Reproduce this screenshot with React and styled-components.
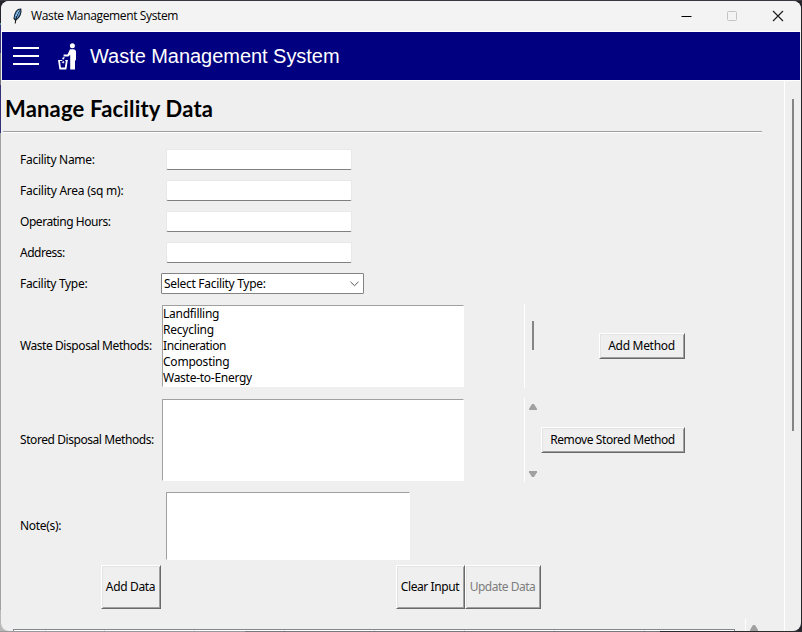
import React from "react";
import styled, { createGlobalStyle } from "styled-components";

const GlobalStyle = createGlobalStyle`
  * { box-sizing: border-box; }
  html, body { margin: 0; padding: 0; overflow: hidden; }
  body { font-family: "Noto Sans", "Open Sans", sans-serif; font-size: 12px; color: #000; }
`;

const Desktop = styled.div`
  width: 802px;
  height: 632px;
  padding: 1px 1px 1px 1px;
  background:
    linear-gradient(#39373f, #39373f) 0 0 / 100% 1px no-repeat,
    linear-gradient(90deg, #999 0 245px, #777 245px 660px, #2b2b2e 660px) 0 631px / 100% 1px no-repeat,
    linear-gradient(#25232c 0 23px, #5a8a9a 23px 25px, #34307a 25px 53px, #77777d 53px 85px, #332f78 85px 133px, #a0a0a0 133px 610px, #b8b8b8 610px) 0 0 / 10px 100% no-repeat,
    linear-gradient(#24242a, #24242a);
`;

const Window = styled.div`
  width: 800px;
  height: 630px;
  border-radius: 8px;
  overflow: hidden;
  background: #efefef;
  display: flex;
  flex-direction: column;
`;

const TitleBar = styled.header`
  flex: none;
  height: 31px;
  background: #f3f3f3;
  border-bottom: 1px solid #fff;
  display: flex;
  align-items: center;
  padding-left: 9px;
`;

const WindowTitle = styled.span`
  flex: 1;
  margin-left: 7px;
  font: 12px/16px "Open Sans", sans-serif;
  letter-spacing: ${(p) => p.$ls}px;
  white-space: nowrap;
`;

const WindowControls = styled.div`
  display: flex;
  align-items: center;
  gap: 31px;
  padding-right: 17px;
`;

const AppBar = styled.div`
  flex: none;
  height: 49px;
  margin: 0 1px;
  background: #000080;
  border-bottom: 1px solid #fff;
  display: flex;
  align-items: center;
  padding-left: 11px;
`;

const MenuIcon = styled.div`
  width: 26px;
  height: 18px;
  display: flex;
  flex-direction: column;
  justify-content: space-between;
`;

const MenuBar = styled.i`
  height: 2px;
  background: #fff;
`;

const BinIcon = styled.svg`
  margin-left: 19px;
`;

const AppName = styled.h1`
  margin: 0 0 0 13px;
  color: #fff;
  font: 400 20px/24px "Liberation Sans", Arial, sans-serif;
  letter-spacing: ${(p) => p.$ls}px;
  white-space: nowrap;
`;

const Body = styled.div`
  flex: 1;
  min-height: 0;
  display: flex;
`;

const Page = styled.main`
  width: 783px;
  display: flex;
  flex-direction: column;
`;

const PageScroll = styled.div`
  width: 17px;
  padding: 18px 0 0 7px;
  border-left: 1px solid #fff;
`;

const Thumb = styled.div`
  width: 2px;
  height: ${(p) => p.$h}px;
  background: #858585;
`;

const PageTitle = styled.h2`
  margin: 0 22px 0 2px;
  height: 52px;
  padding: 13px 0 0 2px;
  border-bottom: 1px solid #fff;
  box-shadow: inset 0 -1px #a0a0a0;
  font: 700 22px/30px Lato, sans-serif;
  letter-spacing: ${(p) => p.$ls}px;
  white-space: nowrap;
`;

const Form = styled.form`
  padding: 11px 0 0 19px;
`;

const Row = styled.div`
  display: grid;
  grid-template-columns: 141px 363px 1fr;
  align-items: center;
  height: ${(p) => p.$h || 31}px;
  margin-bottom: ${(p) => p.$gap || 0}px;
`;

const Label = styled.label`
  letter-spacing: ${(p) => p.$ls || 0}px;
  line-height: 16px;
  white-space: nowrap;
`;

const Input = styled.input`
  width: 186px;
  height: 21px;
  margin-left: 5px;
  padding: 0 3px;
  border: 1px solid #e8e8e8;
  border-bottom-color: #808080;
  border-radius: 2px;
  background: #fff;
  outline: none;
`;

const Combo = styled.div`
  width: 203px;
  height: 21px;
  padding: 0 4px 0 2px;
  border: 1px solid #838383;
  border-radius: 1px;
  background: #fff;
  display: flex;
  align-items: center;
  justify-content: space-between;
`;

const ListBox = styled.div`
  width: 302px;
  height: 82px;
  margin-left: 1px;
  border: 1px solid #fff;
  border-top-color: #a0a0a0;
  border-left-color: #a0a0a0;
  background: #fff;
`;

const ListItem = styled.div`
  height: 16px;
  line-height: 15px;
  letter-spacing: ${(p) => p.$ls}px;
  white-space: nowrap;
`;

const Notes = styled.textarea`
  display: block;
  width: 244px;
  height: 68px;
  margin-left: 5px;
  border: 1px solid #fff;
  border-top-color: #a0a0a0;
  border-left-color: #a0a0a0;
  background: #fff;
  resize: none;
  outline: none;
`;

const RowEnd = styled.div`
  width: 161px;
  height: 84px;
  display: flex;
  align-items: center;
  justify-content: space-between;
`;

const ListScroll = styled.div`
  width: 17px;
  height: 84px;
  border-left: 1px solid #fff;
  padding: ${(p) => (p.$arrows ? "6px 0 5px" : "17px 0 0")};
  display: flex;
  flex-direction: column;
  align-items: center;
  justify-content: ${(p) => (p.$arrows ? "space-between" : "flex-start")};
`;

const Button = styled.button`
  flex: none;
  width: ${(p) => p.$w}px;
  height: ${(p) => p.$h || 26}px;
  padding: 0 1px 1px 0;
  border: 1px solid #fff;
  border-right-color: #696969;
  border-bottom-color: #696969;
  box-shadow: inset 1px 1px #e3e3e3, inset -1px -1px #a0a0a0;
  background: #efefef;
  font: inherit;
  letter-spacing: ${(p) => p.$ls || 0}px;
  white-space: nowrap;
  color: #000;
  &:disabled { color: #7d7d7d; }
`;

const Actions = styled.div`
  display: flex;
  padding-left: 81px;
  margin-top: 5px;
`;

const ActionGroup = styled.div`
  display: flex;
  margin-left: 235px;
`;

const TableArea = styled.div`
  display: flex;
  margin-top: 10px;
  padding-left: 12px;
  height: 12px;
  overflow: hidden;
`;

const TableTop = styled.div`
  width: 722px;
  height: 12px;
  margin-top: 10px;
  border: 1px solid #828790;
  border-bottom: 0;
  background: #fff;
  display: flex;
`;

const HeaderCell = styled.div`
  width: ${(p) => p.$w}px;
  border-right: 1px solid #ddd;
`;

const TableScroll = styled.div`
  width: 17px;
  margin-left: 10px;
  border-left: 1px solid #fff;
  padding: 6px 0 0 4px;
`;

function Feather() {
  return (
    <svg width="14" height="18" viewBox="0 0 14 18">
      <path d="M10.8 2 C7.2 2 4.6 6 4 11.5 L5.6 13.2 C9.5 10.7 11.8 6 10.8 2Z" fill="#5d9ed8" stroke="#15202c" strokeWidth="1.1" />
      <path d="M9.8 3.5 C7.2 7 5.8 11 5.2 16.5" fill="none" stroke="#111" strokeWidth="1" />
      <path d="M8.8 3.5 L6 9" stroke="#a9d2f4" strokeWidth="1" />
    </svg>
  );
}

function LitterIcon() {
  return (
    <BinIcon width="19" height="27" viewBox="0 0 19 27" fill="none">
      <circle cx="14.4" cy="2.8" r="2.5" fill="#fff" />
      <path d="M12 6.3 H15.2 Q18 6.3 18 9.3 V16.5 Q18 17.5 17 17.7 V26.4 H12.2 V11.8 L10.4 13.4 H5.6 V11.5 H9.5Z" fill="#fff" />
      <path d="M1 17.7 L2.2 25.5 H7.6 L8.8 17.7" stroke="#fff" strokeWidth="1.8" />
      <path d="M.2 17.5 H4.3 M7.3 17.5 H9.8" stroke="#fff" strokeWidth="1.2" />
      <path d="M4 19.5 L5.5 18 L6 20Z M5 14.4 L6.4 14.5 L5.6 16.2 L4.4 16Z" fill="#fff" stroke="#fff" strokeWidth=".5" />
    </BinIcon>
  );
}

const ArrowSvg = styled.svg`
  display: block;
`;

function Arrow({ down }) {
  return (
    <ArrowSvg width="8" height="6" viewBox="0 0 8 6">
      <path d={down ? "M0 0H8V1.2L5 6H3L0 1.2Z" : "M0 6H8V4.8L5 0H3L0 4.8Z"} fill="#a0a0a0" />
    </ArrowSvg>
  );
}

const fields = [
  ["Facility Name:", -0.28],
  ["Facility Area (sq m):", -0.24],
  ["Operating Hours:", -0.45],
  ["Address:", -0.5],
];

const methods = [
  ["Landfilling", -0.27],
  ["Recycling", -0.22],
  ["Incineration", -0.42],
  ["Composting", -0.22],
  ["Waste-to-Energy", -0.27],
];

const columns = [32, 59, 90, 90, 90, 90, 90, 90];

export default function App() {
  return (
    <Desktop>
      <GlobalStyle />
      <Window>
        <TitleBar>
          <Feather />
          <WindowTitle $ls={-0.36}>Waste Management System</WindowTitle>
          <WindowControls>
            <svg width="14" height="12"><path d="M1.5 6.5H11.5" stroke="#000" /></svg>
            <svg width="14" height="12"><rect x="2.5" y="1.5" width="9" height="9" rx="1" fill="none" stroke="#c4c4c4" /></svg>
            <svg width="14" height="12"><path d="M3 1L13 11M13 1L3 11" stroke="#1a1a1a" strokeWidth="1.1" /></svg>
          </WindowControls>
        </TitleBar>
        <AppBar>
          <MenuIcon><MenuBar /><MenuBar /><MenuBar /></MenuIcon>
          <LitterIcon />
          <AppName $ls={-0.04}>Waste Management System</AppName>
        </AppBar>
        <Body>
          <Page>
            <PageTitle $ls={0.18}>Manage Facility Data</PageTitle>
            <Form>
              {fields.map(([name, ls]) => (
                <Row key={name}>
                  <Label $ls={ls}>{name}</Label>
                  <Input />
                </Row>
              ))}
              <Row $gap={5}>
                <Label $ls={-0.3}>Facility Type:</Label>
                <Combo>
                  <Label $ls={-0.3}>Select Facility Type:</Label>
                  <svg width="9" height="6"><path d="M.5 .8L4.5 4.7L8.5 .8" fill="none" stroke="#555" /></svg>
                </Combo>
              </Row>
              <Row $h={84} $gap={10}>
                <Label $ls={-0.43}>Waste Disposal Methods:</Label>
                <ListBox>
                  {methods.map(([m, ls]) => <ListItem key={m} $ls={ls}>{m}</ListItem>)}
                </ListBox>
                <RowEnd>
                  <ListScroll><Thumb $h={29} /></ListScroll>
                  <Button type="button" $w={86} $ls={-0.3}>Add Method</Button>
                </RowEnd>
              </Row>
              <Row $h={84} $gap={10}>
                <Label $ls={-0.43}>Stored Disposal Methods:</Label>
                <ListBox />
                <RowEnd>
                  <ListScroll $arrows><Arrow /><Arrow down /></ListScroll>
                  <Button type="button" $w={144} $ls={-0.4}>Remove Stored Method</Button>
                </RowEnd>
              </Row>
              <Row $h={68}>
                <Label $ls={-0.3}>Note(s):</Label>
                <Notes />
              </Row>
              <Actions>
                <Button type="button" $w={60} $h={44} $ls={-0.35}>Add Data</Button>
                <ActionGroup>
                  <Button type="button" $w={69} $h={44} $ls={-0.4}>Clear Input</Button>
                  <Button type="button" $w={76} $h={44} $ls={-0.5} disabled>Update Data</Button>
                </ActionGroup>
              </Actions>
            </Form>
            <TableArea>
              <TableTop>{columns.map((w, i) => <HeaderCell key={i} $w={w} />)}</TableTop>
              <TableScroll><Arrow /></TableScroll>
            </TableArea>
          </Page>
          <PageScroll><Thumb $h={332} /></PageScroll>
        </Body>
      </Window>
    </Desktop>
  );
}
